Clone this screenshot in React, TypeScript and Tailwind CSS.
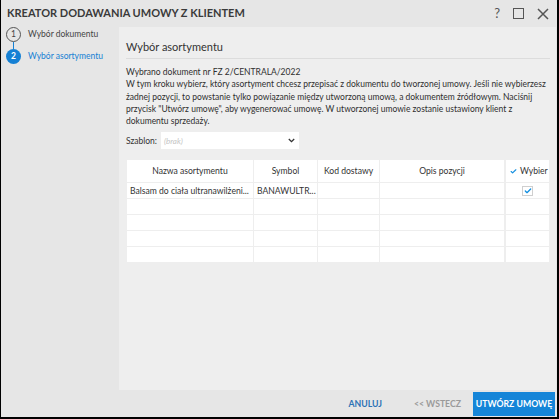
import { Check } from 'lucide-react'

const font = { fontFamily: 'Lato, "Open Sans", sans-serif' }

const rows = [
  { name: 'Balsam do ciała ultranawilżeni...', symbol: 'BANAWULTR...', checked: true },
  { name: '', symbol: '', checked: false },
  { name: '', symbol: '', checked: false },
  { name: '', symbol: '', checked: false },
  { name: '', symbol: '', checked: false },
]

const StepItem = ({ n, label, active }: { n: number; label: string; active?: boolean }) => (
  <div className="flex items-center gap-[7px] h-[15px] whitespace-nowrap">
    {active ? (
      <span className="w-[15px] h-[15px] rounded-full bg-[#1580d4] text-white text-[8.5px] font-bold flex items-center justify-center">
        {n}
      </span>
    ) : (
      <span className="w-[15px] h-[15px] rounded-full border border-[#555] text-[#444] text-[8.5px] flex items-center justify-center bg-[#e6e6e6]">
        {n}
      </span>
    )}
    <span className={`text-[8.5px] ${active ? 'text-[#1580d4]' : 'text-[#444]'}`}>{label}</span>
  </div>
)

export default function App() {
  return (
    <div
      style={font}
      className="w-[559px] h-[419px] bg-[#e6e6e6] border-l border-r-2 border-b-2 border-black flex flex-col overflow-hidden"
    >
      {/* title bar */}
      <div className="h-[27px] flex items-center justify-between pl-[6px] pr-[8px] shrink-0">
        <span className="text-[11px] font-bold text-[#3a3a3a]">KREATOR DODAWANIA UMOWY Z KLIENTEM</span>
        <div className="flex items-center gap-[13px] text-[#555]">
          <span className="text-[13px] leading-none">?</span>
          <span className="w-[11px] h-[11px] border-[1.5px] border-[#555]" />
          <svg width="12" height="12" viewBox="0 0 12 12">
            <path d="M1 1 L11 11 M11 1 L1 11" stroke="#555" strokeWidth="1.5" />
          </svg>
        </div>
      </div>

      <div className="flex flex-1 min-h-0">
        {/* steps */}
        <div className="w-[118px] shrink-0 pl-[5px]">
          <StepItem n={1} label="Wybór dokumentu" />
          <div className="ml-[7px] w-px h-[7px] bg-[#1580d4]" />
          <StepItem n={2} label="Wybór asortymentu" active />
        </div>

        {/* content */}
        <div className="flex-1 mr-px bg-[#eeeeee] pl-[7px] pr-[6px] flex flex-col">
          <div className="mt-[13px] pb-[4px] border-b border-[#dcdcdc] text-[11px] leading-[14px] text-[#333]">Wybór asortymentu</div>
          <div className="mt-[7px] text-[8.5px] leading-[12.3px] text-[#2e2e2e] whitespace-nowrap">
            <div>Wybrano dokument nr FZ 2/CENTRALA/2022</div>
            <div>W tym kroku wybierz, który asortyment chcesz przepisać z dokumentu do tworzonej umowy. Jeśli nie wybierzesz</div>
            <div>żadnej pozycji, to powstanie tylko powiązanie między utworzoną umową, a dokumentem źródłowym. Naciśnij</div>
            <div>przycisk "Utwórz umowę", aby wygenerować umowę. W utworzonej umowie zostanie ustawiony klient z</div>
            <div>dokumentu sprzedaży.</div>
          </div>

          <div className="mt-[5px] flex items-center gap-[4px]">
            <span className="text-[8.5px] text-[#333]">Szablon:</span>
            <div className="w-[138px] h-[17px] bg-white flex items-center justify-between pl-[3px] pr-[4px]">
              <span className="text-[8px] italic text-[#c4c4c4]">(brak)</span>
              <svg width="7" height="5" viewBox="0 0 7 5">
                <path d="M0.8 1 L3.5 3.7 L6.2 1" stroke="#333" strokeWidth="1.3" fill="none" />
              </svg>
            </div>
          </div>

          {/* table */}
          <div className="mt-[11px] ml-px grid grid-cols-[126px_63px_61px_125px_43px] gap-x-px gap-y-px text-[8.6px] text-[#333]">
            <div className="h-[22px] bg-white flex items-center justify-center">Nazwa asortymentu</div>
            <div className="h-[22px] bg-white flex items-center justify-center">Symbol</div>
            <div className="h-[22px] bg-white flex items-center justify-center">Kod dostawy</div>
            <div className="h-[22px] bg-white flex items-center justify-center mr-px">Opis pozycji</div>
            <div className="h-[22px] bg-white flex items-center pl-[4px] gap-[3px] whitespace-nowrap overflow-hidden">
              <Check className="w-[7px] h-[7px] shrink-0 text-[#1590e0]" strokeWidth={4} />
              Wybier
            </div>
            {rows.map((r, i) => (
              <div key={i} className="contents">
                <div className="h-[15px] bg-white flex items-center pl-[3px] whitespace-nowrap overflow-hidden">{r.name}</div>
                <div className="h-[15px] bg-white flex items-center pl-[3px] whitespace-nowrap overflow-hidden">{r.symbol}</div>
                <div className="h-[15px] bg-white" />
                <div className="h-[15px] bg-white mr-px" />
                <div className="h-[15px] bg-white flex items-center justify-center">
                  {r.checked && (
                    <span className="w-[11px] h-[10px] bg-white border border-[#cfcfcf] flex items-center justify-center">
                      <Check className="w-[8px] h-[8px] text-[#1590e0]" strokeWidth={4} />
                    </span>
                  )}
                </div>
              </div>
            ))}
          </div>
        </div>
      </div>

      {/* footer */}
      <div className="h-[27px] shrink-0 flex items-center justify-end pr-[2px] whitespace-nowrap">
        <button className="text-[8.7px] font-bold text-[#2b72b5] mr-[32px]">ANULUJ</button>
        <button className="text-[8.7px] font-bold text-[#9a9a9a] mr-[12px]">&lt;&lt; WSTECZ</button>
        <button className="h-[24px] w-[82px] bg-[#1585d8] text-white text-[8.7px] font-bold">UTWÓRZ UMOWĘ</button>
      </div>
    </div>
  )
}
